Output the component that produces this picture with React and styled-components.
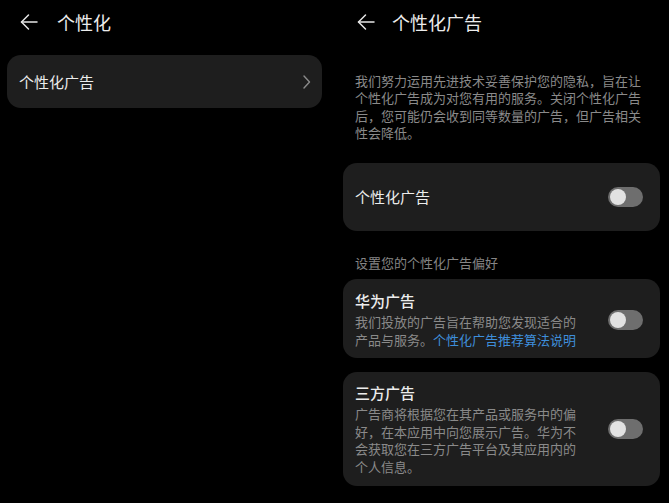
import styled, { createGlobalStyle } from "styled-components";

const GlobalStyle = createGlobalStyle`
  html, body {
    margin: 0;
    padding: 0;
    background: #000;
  }
  body {
    font-family: "Noto Sans CJK SC", "Noto Sans", sans-serif;
    color: #e6e6e6;
  }
`;

const Screen = styled.div`
  display: flex;
  width: 669px;
  height: 503px;
  background: #000;
  overflow: hidden;
`;

const Panel = styled.div`
  display: flex;
  flex-direction: column;
  width: ${(p) => p.width}px;
  padding: 0 ${(p) => p.right}px 0 ${(p) => p.left}px;
  box-sizing: border-box;
`;

const Header = styled.div`
  display: flex;
  align-items: center;
  height: 44px;
  padding-left: ${(p) => p.inset}px;
  gap: ${(p) => p.gap}px;
`;

const Title = styled.div`
  font-size: 18px;
  line-height: 24px;
  color: #ececec;
`;

const Intro = styled.div`
  margin: 28px 12px 0 12px;
  font-size: 13px;
  line-height: 17.3px;
  color: #8a8a8a;
`;

const Card = styled.div`
  display: flex;
  align-items: center;
  background: #1e1e1e;
  border-radius: 14px;
  margin-top: ${(p) => p.top || 0}px;
  min-height: ${(p) => p.h}px;
  padding: ${(p) => p.pad || "0"};
  padding-left: 12px;
  padding-right: ${(p) => p.padRight || 14}px;
  box-sizing: border-box;
`;

const CardLabel = styled.div`
  flex: 1;
  font-size: 15px;
  line-height: 20px;
  color: #ececec;
`;

const TextCol = styled.div`
  display: flex;
  flex-direction: column;
  width: 226px;
  margin-right: auto;
`;

const ItemTitle = styled.div`
  font-size: 15px;
  line-height: 20px;
  font-weight: 500;
  color: #ececec;
  margin-bottom: 2px;
`;

const ItemDesc = styled.div`
  font-size: 13px;
  line-height: 17.5px;
  color: #8a8a8a;
`;

const Link = styled.span`
  color: #3e8edb;
`;

const SectionLabel = styled.div`
  margin: 23px 12px 7px;
  font-size: 13px;
  line-height: 18px;
  color: #858585;
`;

const Track = styled.div`
  display: flex;
  align-items: center;
  width: 35px;
  height: 20px;
  border-radius: 10px;
  background: #6e6e6e;
  padding: 0 2px;
  box-sizing: border-box;
  flex-shrink: 0;
  margin-right: 3px;
`;

const Knob = styled.div`
  width: 16px;
  height: 16px;
  border-radius: 50%;
  background: #e2e2e2;
`;

function BackArrow() {
  return (
    <svg width="18" height="18" viewBox="0 0 18 18" fill="none" stroke="#e6e6e6" strokeWidth="1.5" strokeLinecap="round" strokeLinejoin="round">
      <path d="M1.5 9 H17" />
      <path d="M8.5 2 L1.5 9 L8.5 16" />
    </svg>
  );
}

function Chevron() {
  return (
    <svg width="9" height="14" viewBox="0 0 9 14" fill="none" stroke="#8a8a8a" strokeWidth="1.4" strokeLinecap="round" strokeLinejoin="round">
      <path d="M2 1 L7.5 7 L2 13" />
    </svg>
  );
}

function Toggle() {
  return (
    <Track>
      <Knob />
    </Track>
  );
}

export default function App() {
  return (
    <Screen>
      <GlobalStyle />
      <Panel width={335} left={7} right={13}>
        <Header inset={13} gap={19}>
          <BackArrow />
          <Title>个性化</Title>
        </Header>
        <Card top={11} h={53} padRight={11}>
          <CardLabel>个性化广告</CardLabel>
          <Chevron />
        </Card>
      </Panel>
      <Panel width={334} left={8} right={9}>
        <Header inset={14} gap={17}>
          <BackArrow />
          <Title>个性化广告</Title>
        </Header>
        <Intro>
          我们努力运用先进技术妥善保护您的隐私，旨在让个性化广告成为对您有用的服务。关闭个性化广告后，您可能仍会收到同等数量的广告，但广告相关性会降低。
        </Intro>
        <Card top={22} h={68}>
          <CardLabel>个性化广告</CardLabel>
          <Toggle />
        </Card>
        <SectionLabel>设置您的个性化广告偏好</SectionLabel>
        <Card h={79} pad="12px 0 10px">
          <TextCol>
            <ItemTitle>华为广告</ItemTitle>
            <ItemDesc>
              我们投放的广告旨在帮助您发现适合的产品与服务。<Link>个性化广告推荐算法说明</Link>
            </ItemDesc>
          </TextCol>
          <Toggle />
        </Card>
        <Card top={14} h={113} pad="11px 0 11px">
          <TextCol>
            <ItemTitle>三方广告</ItemTitle>
            <ItemDesc>
              广告商将根据您在其产品或服务中的偏好，在本应用中向您展示广告。华为不会获取您在三方广告平台及其应用内的个人信息。
            </ItemDesc>
          </TextCol>
          <Toggle />
        </Card>
      </Panel>
    </Screen>
  );
}
